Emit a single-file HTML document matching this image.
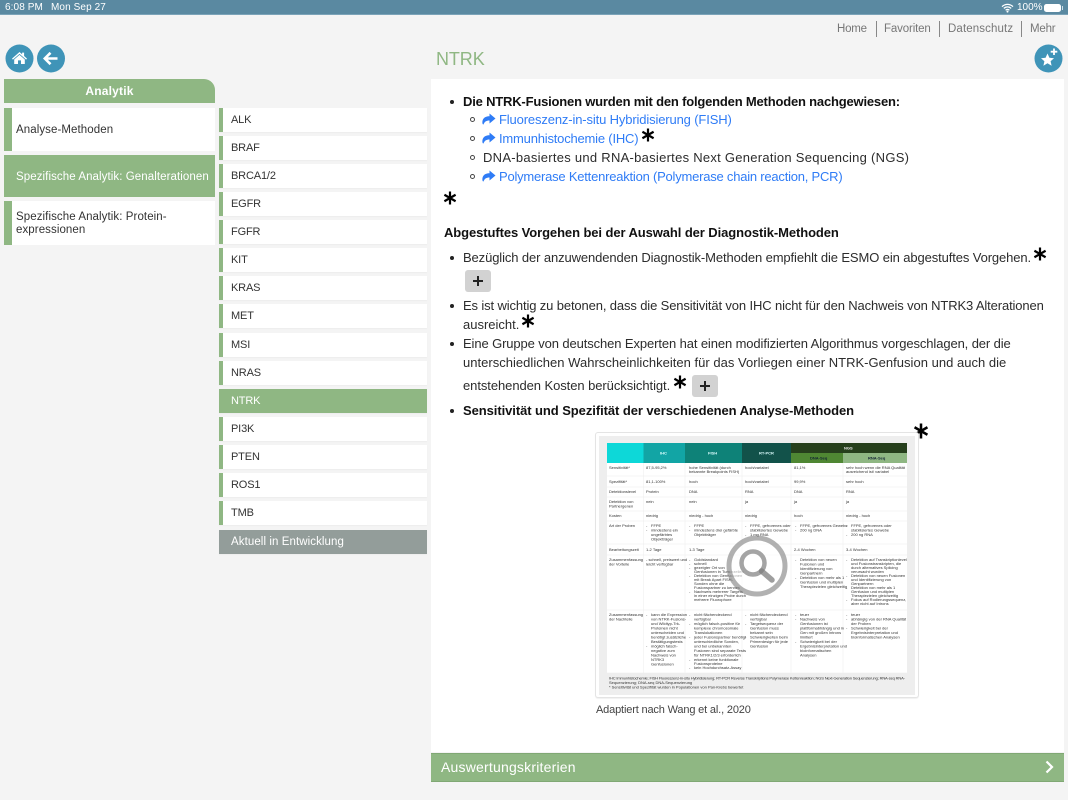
<!DOCTYPE html>
<html lang="de"><head><meta charset="utf-8"><title>NTRK</title>
<style>
html,body{margin:0;padding:0}
body{width:1068px;height:800px;overflow:hidden;position:relative;background:#f4f4f4;font-family:"Liberation Sans",sans-serif;color:#333}
.a,.l,.ast{position:absolute}
.l{white-space:nowrap;line-height:16px;height:16px;font-size:13px;margin-top:1px;color:#2c2c2c}
.b{font-weight:bold;color:#111}
.lk{color:#2f7cf6}
.dot{position:absolute;width:4px;height:4px;border-radius:50%;background:#222}
.ring{position:absolute;width:3px;height:3px;border-radius:50%;border:1px solid #444;box-sizing:content-box;margin-left:-.5px}
.m{position:absolute;left:219px;width:208px;height:24px;background:#fff;box-shadow:0 1px 1px rgba(0,0,0,.03)}
.m i{position:absolute;left:0;top:0;width:4px;height:100%;background:#8fb783}
.m span{position:absolute;left:12px;top:4px;font-size:11px;line-height:16px;letter-spacing:-.15px;color:#333}
.m.s{background:#8fb783}.m.s span{color:#fff}
.s1{position:absolute;left:4px;width:211px;background:#fff}
.s1 i{position:absolute;left:0;top:0;width:7.5px;height:100%;background:#8fb783}
.s1 span{position:absolute;left:12px;font-size:11.5px;line-height:13px;letter-spacing:.08px;color:#333;white-space:nowrap}
.plus{position:absolute;background:#d2d2d2;border-radius:3px;width:26px;height:22px}
.plus:before{content:"";position:absolute;left:8px;top:10px;width:10px;height:2px;background:#222}
.plus:after{content:"";position:absolute;left:12px;top:6px;width:2px;height:10px;background:#222}
.nav{position:absolute;top:22px;font-size:11.5px;line-height:15px;color:#777}
.sep{position:absolute;top:21px;width:1px;height:16px;background:#888}
.t text{font-family:"Liberation Sans",sans-serif;font-size:4px;fill:#333}
</style></head><body>

<div class="a" style="left:0;top:0;width:1068px;height:15px;background:#5a89a1;border-bottom:1px solid #7ba3b8;box-sizing:border-box"></div>
<div class="a" style="left:5px;top:2px;font-size:10px;line-height:12px;letter-spacing:.1px;color:#fff">6:08 PM</div>
<div class="a" style="left:51px;top:2px;font-size:10px;line-height:12px;letter-spacing:.1px;color:#fff">Mon Sep 27</div>
<svg class="a" style="left:1001px;top:3px" width="13" height="10" viewBox="0 0 13 10"><path d="M1 3.6C4.3.6 8.7.6 12 3.6M2.8 5.4c2.3-2 5.1-2 7.4 0M4.6 7.2c1.2-1 2.600-1 3.800 0" fill="none" stroke="#fff" stroke-width="1.3"/><circle cx="6.5" cy="8.6" r="1" fill="#fff"/></svg>
<div class="a" style="left:1017px;top:2px;font-size:10px;line-height:12px;color:#fff">100%</div>
<div class="a" style="left:1044px;top:4px;width:17px;height:8px;background:#fff;border-radius:2.5px"></div>
<div class="a" style="left:1062px;top:6px;width:1px;height:4px;background:#cfe0e8"></div>

<div class="nav" style="left:837px;letter-spacing:-.2px">Home</div><div class="sep" style="left:876px"></div>
<div class="nav" style="left:884px;letter-spacing:-.14px">Favoriten</div><div class="sep" style="left:939px"></div>
<div class="nav" style="left:948px;letter-spacing:.12px">Datenschutz</div><div class="sep" style="left:1021px"></div>
<div class="nav" style="left:1030px;letter-spacing:-.2px">Mehr</div>

<svg class="a" style="left:5px;top:44px" width="60" height="29" viewBox="0 0 60 29">
<circle cx="14.5" cy="14.5" r="14" fill="#3f94b8"/><circle cx="46" cy="14.5" r="14" fill="#3f94b8"/>
<path d="M14.500 8L7 14.600l.9 1 6.600-5.700 6.600 5.700.9-1-2.900-2.600V8.600h-2v1.700z" fill="#fff"/><path d="M9.200 15.500l5.300-4.600 5.300 4.600V20H16v-3.600h-3V20H9.200z" fill="#fff"/>
<path d="M52.500 14.500H40M45.500 8.800l-5.700 5.700 5.700 5.700" fill="none" stroke="#fff" stroke-width="2.600"/>
</svg>
<svg class="a" style="left:1034px;top:44px" width="29" height="29" viewBox="0 0 29 29">
<circle cx="14.5" cy="14.5" r="14" fill="#3f94b8"/>
<path d="M13.500 9.500l1.900 4.200 4.600.5-3.400 3 1 4.500-4.100-2.400-4.100 2.400 1-4.500-3.400-3 4.600-.5z" fill="#fff"/>
<path d="M20 4.500v6.500M16.700 7.700h6.600" stroke="#fff" stroke-width="1.800"/>
</svg>

<div class="a" style="left:436px;top:47px;font-size:18px;line-height:24px;color:#8fb783;letter-spacing:-.1px">NTRK</div>

<div class="a" style="left:4px;top:79px;width:211px;height:24px;background:#8fb783;border-radius:0 11px 0 0;color:#fff;font-weight:bold;font-size:12px;line-height:24px;text-align:center;letter-spacing:.2px">Analytik</div>
<div class="s1" style="top:108px;height:43px"><i></i><span style="top:15px;margin-top:1px">Analyse-Methoden</span></div>
<div class="s1" style="top:155px;height:42px;background:#8fb783"><span style="top:15px;margin-top:1px;color:#fff">Spezifische Analytik: Genalterationen</span></div>
<div class="s1" style="top:201px;height:44px"><i></i><span style="top:10px">Spezifische Analytik: Protein-<br>expressionen</span></div>

<div class="m" style="top:108px"><i></i><span>ALK</span></div>
<div class="m" style="top:136px"><i></i><span>BRAF</span></div>
<div class="m" style="top:164px"><i></i><span>BRCA1/2</span></div>
<div class="m" style="top:192px"><i></i><span>EGFR</span></div>
<div class="m" style="top:220px"><i></i><span>FGFR</span></div>
<div class="m" style="top:248px"><i></i><span>KIT</span></div>
<div class="m" style="top:276px"><i></i><span>KRAS</span></div>
<div class="m" style="top:304px"><i></i><span>MET</span></div>
<div class="m" style="top:333px"><i></i><span>MSI</span></div>
<div class="m" style="top:361px"><i></i><span>NRAS</span></div>
<div class="m s" style="top:389px"><span>NTRK</span></div>
<div class="m" style="top:417px"><i></i><span>PI3K</span></div>
<div class="m" style="top:445px"><i></i><span>PTEN</span></div>
<div class="m" style="top:473px"><i></i><span>ROS1</span></div>
<div class="m" style="top:501px"><i></i><span>TMB</span></div>
<div class="m" style="top:530px;background:#939d9a"><span style="color:#fff;font-size:11.5px;letter-spacing:.08px">Aktuell in Entwicklung</span></div>

<div class="a" style="left:431px;top:79px;width:633px;height:673px;background:#fff"></div>

<div class="dot" style="left:450px;top:100px"></div>
<div class="l b" style="left:463px;top:93px;letter-spacing:-.19px">Die NTRK-Fusionen wurden mit den folgenden Methoden nachgewiesen:</div>
<div class="ring" style="left:470px;top:117px"></div>
<svg class="a" style="left:482px;top:113px" width="14" height="12" viewBox="0 0 14 12"><path d="M7.500.5l6 5-6 5v-3C4.500 7.500 2.500 8.500 1.500 11.500.2 11.500.2 9 .6 7.500 1.400 4.500 4 3.200 7.500 3.200z" fill="#2f7cf6"/></svg>
<div class="l lk" style="left:499px;top:111px;letter-spacing:-.14px">Fluoreszenz-in-situ Hybridisierung (FISH)</div>
<div class="ring" style="left:470px;top:136px"></div>
<svg class="a" style="left:482px;top:132px" width="14" height="12" viewBox="0 0 14 12"><path d="M7.500.5l6 5-6 5v-3C4.500 7.500 2.500 8.500 1.500 11.500.2 11.500.2 9 .6 7.500 1.400 4.500 4 3.200 7.500 3.200z" fill="#2f7cf6"/></svg>
<div class="l lk" style="left:499px;top:130px;letter-spacing:-.2px">Immunhistochemie (IHC)</div>
<div class="ring" style="left:470px;top:155px"></div>
<div class="l" style="left:483px;top:149px;letter-spacing:.27px">DNA-basiertes und RNA-basiertes Next Generation Sequencing (NGS)</div>
<div class="ring" style="left:470px;top:174px"></div>
<svg class="a" style="left:482px;top:170px" width="14" height="12" viewBox="0 0 14 12"><path d="M7.500.5l6 5-6 5v-3C4.500 7.500 2.500 8.500 1.500 11.500.2 11.500.2 9 .6 7.500 1.400 4.500 4 3.200 7.500 3.200z" fill="#2f7cf6"/></svg>
<div class="l lk" style="left:499px;top:168px;letter-spacing:-.22px">Polymerase Kettenreaktion (Polymerase chain reaction, PCR)</div>

<div class="l b" style="left:444px;top:224px;letter-spacing:-.09px">Abgestuftes Vorgehen bei der Auswahl der Diagnostik-Methoden</div>

<div class="dot" style="left:450px;top:256px"></div>
<div class="l" style="left:463px;top:249px;letter-spacing:-.11px">Bezüglich der anzuwendenden Diagnostik-Methoden empfiehlt die ESMO ein abgestuftes Vorgehen.</div>
<div class="plus" style="left:465px;top:270px"></div>
<div class="dot" style="left:450px;top:304px"></div>
<div class="l" style="left:463px;top:297px;letter-spacing:-.13px">Es ist wichtig zu betonen, dass die Sensitivität von IHC nicht für den Nachweis von NTRK3 Alterationen</div>
<div class="l" style="left:463px;top:316px">ausreicht.</div>
<div class="dot" style="left:450px;top:342px"></div>
<div class="l" style="left:463px;top:335px;letter-spacing:-.11px">Eine Gruppe von deutschen Experten hat einen modifizierten Algorithmus vorgeschlagen, der die</div>
<div class="l" style="left:463px;top:354px;letter-spacing:.02px">unterschiedlichen Wahrscheinlichkeiten für das Vorliegen einer NTRK-Genfusion und auch die</div>
<div class="l" style="left:463px;top:377px;letter-spacing:-.07px">entstehenden Kosten berücksichtigt.</div>
<div class="plus" style="left:692px;top:375px"></div>
<div class="dot" style="left:450px;top:409px"></div>
<div class="l b" style="left:463px;top:402px;letter-spacing:-.07px">Sensitivität und Spezifität der verschiedenen Analyse-Methoden</div>

<svg class="a" style="left:0;top:0;pointer-events:none" width="1068" height="800">
<defs><g id="st" stroke="#000" stroke-width="2.200"><path d="M0-6.500V6.500M-5.600-3.250L5.600 3.250M-5.600 3.250L5.600-3.250"/></g></defs>
<use href="#st" x="648" y="135"/><use href="#st" x="450" y="198"/><use href="#st" x="1040" y="254"/><use href="#st" x="528" y="321"/><use href="#st" x="680" y="382"/><use href="#st" transform="translate(921 431) scale(1.150)"/>
</svg>

<div class="a" style="left:595px;top:432px;width:324px;height:266px;background:#fff;border:1px solid #e4e4e4;border-radius:3px;box-sizing:border-box;box-shadow:0 1px 1px rgba(0,0,0,.06)"></div>
<svg class="a t" style="left:599px;top:436px" width="316" height="259" viewBox="599 436 316 259">
<rect x="599" y="436" width="316" height="259" fill="#eeeeee"/>
<rect x="607" y="443" width="300" height="230" fill="#fff"/>
<rect x="607" y="443" width="36.500" height="20" fill="#0dd8d8"/>
<rect x="643.500" y="443" width="41.500" height="20" fill="#12a5a5"/>
<rect x="685" y="443" width="57" height="20" fill="#0e8278"/>
<rect x="742" y="443" width="49" height="20" fill="#12524a"/>
<rect x="791" y="443" width="116" height="10" fill="#263f1c"/>
<rect x="791" y="453" width="52" height="10" fill="#4f8733"/>
<rect x="843" y="453" width="64" height="10" fill="#8fb783"/>
<g stroke="#ececec" stroke-width=".5"><path d="M607 476H907M607 487H907M607 497H907M607 511H907M607 521H907M607 544H907M607 555H907M607 610H907M607 673H907M643.500 463V673M685 463V673M742 463V673M791 463V673M843 463V673"/></g>
<g style="filter:blur(.25px)">
<g font-weight="bold"><text x="660" y="454.500" style="fill:#dff">IHC</text><text x="708" y="454.500" style="fill:#dff">FISH</text><text x="759" y="454.500" style="fill:#dff">RT-PCR</text><text x="844" y="449.500" style="fill:#eee">NGS</text><text x="810" y="459.500" style="fill:#123">DNA-Seq</text><text x="868" y="459.500" style="fill:#123">RNA-Seq</text></g>
<text x="609" y="469">Sensitivität*</text><text x="646" y="469">87,5-95,2%</text><text x="689" y="469">hohe Sensitivität (durch</text><text x="689" y="473">bekannte Breakpoints FISH)</text><text x="745" y="469">hoch/variabel</text><text x="794" y="469">81,1%</text><text x="846" y="469">sehr hoch wenn die RNA Qualität</text><text x="846" y="473">ausreichend ist/ variabel</text>
<text x="609" y="483">Spezifität*</text><text x="646" y="483">81,1-100%</text><text x="689" y="483">hoch</text><text x="745" y="483">hoch/variabel</text><text x="794" y="483">99,9%</text><text x="846" y="483">sehr hoch</text>
<text x="609" y="493">Detektionslevel</text><text x="646" y="493">Protein</text><text x="689" y="493">DNA</text><text x="745" y="493">RNA</text><text x="794" y="493">DNA</text><text x="846" y="493">RNA</text>
<text x="609" y="503">Detektion von</text><text x="609" y="507.500">Partnergenen</text><text x="646" y="503">nein</text><text x="689" y="503">nein</text><text x="745" y="503">ja</text><text x="794" y="503">ja</text><text x="846" y="503">ja</text>
<text x="609" y="517">Kosten</text><text x="646" y="517">niedrig</text><text x="689" y="517">niedrig - hoch</text><text x="745" y="517">niedrig</text><text x="794" y="517">hoch</text><text x="846" y="517">niedrig - hoch</text>
<text x="609" y="527">Art der Proben</text>
<text x="646" y="527">-</text><text x="651" y="527">FFPE</text><text x="646" y="531.500">-</text><text x="651" y="531.500">mindestens ein</text><text x="651" y="536">ungefärbtes</text><text x="651" y="540.500">Objektträger</text>
<text x="689" y="527">-</text><text x="694" y="527">FFPE</text><text x="689" y="531.500">-</text><text x="694" y="531.500">mindestens drei gefärbte</text><text x="694" y="536">Objektträger</text>
<text x="745" y="527">-</text><text x="750" y="527">FFPE, gefrorenes oder</text><text x="750" y="531.500">stabilisiertes Gewebe</text><text x="745" y="536">-</text><text x="750" y="536">1 mg RNA</text>
<text x="795" y="527">-</text><text x="800" y="527">FFPE, gefrorenes Gewebe</text><text x="795" y="531.500">-</text><text x="800" y="531.500">200 ng DNA</text>
<text x="846" y="527">-</text><text x="851" y="527">FFPE, gefrorenes oder</text><text x="851" y="531.500">stabilisiertes Gewebe</text><text x="846" y="536">-</text><text x="851" y="536">200 ng RNA</text>
<text x="609" y="551">Bearbeitungszeit</text><text x="646" y="551">1-2 Tage</text><text x="689" y="551">1-3 Tage</text><text x="794" y="551">2-4 Wochen</text><text x="846" y="551">3-4 Wochen</text>
<text x="609" y="561">Zusammenfassung</text><text x="609" y="565.500">der Vorteile</text><text x="646" y="561">- schnell, preiswert und</text><text x="646" y="565.500">leicht verfügbar</text>
<text x="689" y="561">-</text><text x="694" y="561">Goldstandard</text><text x="689" y="565">-</text><text x="694" y="565">schnell</text><text x="689" y="569">-</text><text x="694" y="569">gezeigter Ort von</text><text x="694" y="573">Genfusionen in Tumorzellen</text><text x="689" y="577">-</text><text x="694" y="577">Detektion von Genfusionen</text><text x="694" y="581">mit Break Apart FISH-</text><text x="694" y="585">Sonden ohne die</text><text x="694" y="589">Fusionspartner zu kennen</text><text x="689" y="593">-</text><text x="694" y="593">Nachweis mehrerer Targets</text><text x="694" y="597">in einer einzigen Probe durch</text><text x="694" y="601">mehrere Fluorophore</text>
<text x="795" y="561">-</text><text x="800" y="561">Detektion von neuen</text><text x="800" y="565.500">Fusionen und</text><text x="800" y="570">Identifizierung von</text><text x="800" y="574.500">Genpartnern</text><text x="795" y="579">-</text><text x="800" y="579">Detektion von mehr als 1</text><text x="800" y="583.500">Genfusion und multiplen</text><text x="800" y="588">Therapiezielen gleichzeitig</text>
<text x="846" y="561">-</text><text x="851" y="561">Detektion auf Transkriptionlevel</text><text x="851" y="565">und Fusionstranskripten, die</text><text x="851" y="569">durch alternatives Splicing</text><text x="851" y="573">verursacht wurden</text><text x="846" y="577">-</text><text x="851" y="577">Detektion von neuen Fusionen</text><text x="851" y="581">und Identifizierung von</text><text x="851" y="585">Genpartnern</text><text x="846" y="589">-</text><text x="851" y="589">Detektion von mehr als 1</text><text x="851" y="593">Genfusion und multiplen</text><text x="851" y="597">Therapiezielen gleichzeitig</text><text x="846" y="601">-</text><text x="851" y="601">Fokus auf Rodierungssequenz,</text><text x="851" y="605">aber nicht auf Introns</text>
<text x="609" y="616">Zusammenfassung</text><text x="609" y="620.500">der Nachteile</text>
<text x="646" y="616">-</text><text x="651" y="616">kann die Expression</text><text x="651" y="620.500">von NTRK-Fusions-</text><text x="651" y="625">und Wildtyp-Trk-</text><text x="651" y="629.500">Proteinen nicht</text><text x="651" y="634">unterscheiden und</text><text x="651" y="638.500">benötigt zusätzliche</text><text x="651" y="643">Bestätigungstests</text><text x="646" y="647.500">-</text><text x="651" y="647.500">möglich falsch-</text><text x="651" y="652">negative zum</text><text x="651" y="656.500">Nachweis von</text><text x="651" y="661">NTRK3</text><text x="651" y="665.500">Genfusionen</text>
<text x="689" y="616">-</text><text x="694" y="616">nicht flächendeckend</text><text x="694" y="620.500">verfügbar</text><text x="689" y="625">-</text><text x="694" y="625">möglich falsch-positive für</text><text x="694" y="629.500">komplexe chromosomale</text><text x="694" y="634">Translokationen</text><text x="689" y="638.500">-</text><text x="694" y="638.500">jeder Fusionspartner benötigt</text><text x="694" y="643">unterschiedliche Sonden,</text><text x="694" y="647.500">und bei unbekannten</text><text x="694" y="652">Fusionen sind separate Tests</text><text x="694" y="656.500">für NTRK1/2/3 erforderlich</text><text x="689" y="661">-</text><text x="694" y="661">erkennt keine funktionale</text><text x="694" y="665">Fusionsproteine</text><text x="689" y="669">-</text><text x="694" y="669">kein Hochdurchsatz-Assay</text>
<text x="745" y="616">-</text><text x="750" y="616">nicht flächendeckend</text><text x="750" y="620.500">verfügbar</text><text x="745" y="625">-</text><text x="750" y="625">Targetsequenz der</text><text x="750" y="629.500">Genfusion muss</text><text x="750" y="634">bekannt sein</text><text x="745" y="638.500">-</text><text x="750" y="638.500">Schwierigkeiten beim</text><text x="750" y="643">Primerdesign für jede</text><text x="750" y="647.500">Genfusion</text>
<text x="795" y="616">-</text><text x="800" y="616">teuer</text><text x="795" y="620.500">-</text><text x="800" y="620.500">Nachweis von</text><text x="800" y="625">Genfusionen ist</text><text x="800" y="629.500">plattformabhängig und in</text><text x="800" y="634">Gen mit großen Introns</text><text x="800" y="638.500">limitiert</text><text x="795" y="643">-</text><text x="800" y="643">Schwierigkeit bei der</text><text x="800" y="647.500">Ergebnisinterpretation und</text><text x="800" y="652">bioinformatischen</text><text x="800" y="656.500">Analysen</text>
<text x="846" y="616">-</text><text x="851" y="616">teuer</text><text x="846" y="620.500">-</text><text x="851" y="620.500">abhängig von der RNA Qualität</text><text x="851" y="625">der Proben</text><text x="846" y="629.500">-</text><text x="851" y="629.500">Schwierigkeit bei der</text><text x="851" y="634">Ergebnisinterpretation und</text><text x="851" y="638.500">bioinformatischen Analysen</text>
<text x="609" y="679.500" textLength="296" lengthAdjust="spacing">IHC Immunhistochemie; FISH Fluoreszenz-in-situ Hybridisierung; RT-PCR Reverse Transkriptions Polymerase Kettenreaktion; NGS Next-Generation Sequenzierung; RNA-seq RNA-</text>
<text x="609" y="684">Sequenzierung; DNA-seq DNA-Sequenzierung</text>
<text x="609" y="688.500">* Sensitivität und Spezifität wurden in Populationen von Pan-Krebs bewertet</text>
</g>
<circle cx="757" cy="566" r="28" fill="rgba(255,255,255,.6)" stroke="rgba(125,125,125,.6)" stroke-width="5"/>
<circle cx="753" cy="563" r="11.500" fill="none" stroke="rgba(125,125,125,.7)" stroke-width="4.500"/>
<path d="M761.500 571L772 580" stroke="rgba(125,125,125,.75)" stroke-width="5.500" stroke-linecap="round"/>
</svg>
<div class="a" style="left:596px;top:703px;font-size:11px;line-height:15px;letter-spacing:-.16px;color:#444">Adaptiert nach Wang et al., 2020</div>

<div class="a" style="left:431px;top:753px;width:633px;height:29px;background:#8fb783;box-sizing:border-box;border-top:1px solid #80a874;border-bottom:1px solid #80a874"></div>
<div class="a" style="left:441px;top:759px;font-size:14px;line-height:16px;color:#fff;letter-spacing:.2px">Auswertungskriterien</div>
<svg class="a" style="left:1044px;top:760px" width="12" height="14" viewBox="0 0 12 14"><path d="M2.500 1.500L8 7l-5.500 5.500" fill="none" stroke="#fff" stroke-width="2.200"/></svg>

</body></html>
